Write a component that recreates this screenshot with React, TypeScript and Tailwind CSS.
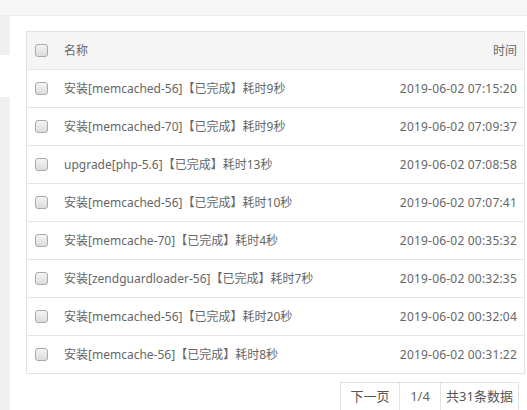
const rows = [
  { name: "安装[memcached-56]【已完成】耗时9秒", time: "2019-06-02 07:15:20" },
  { name: "安装[memcached-70]【已完成】耗时9秒", time: "2019-06-02 07:09:37" },
  { name: "upgrade[php-5.6]【已完成】耗时13秒", time: "2019-06-02 07:08:58" },
  { name: "安装[memcached-56]【已完成】耗时10秒", time: "2019-06-02 07:07:41" },
  { name: "安装[memcache-70]【已完成】耗时4秒", time: "2019-06-02 00:35:32" },
  { name: "安装[zendguardloader-56]【已完成】耗时7秒", time: "2019-06-02 00:32:35" },
  { name: "安装[memcached-56]【已完成】耗时20秒", time: "2019-06-02 00:32:04" },
  { name: "安装[memcache-56]【已完成】耗时8秒", time: "2019-06-02 00:31:22" },
];

function Box() {
  return (
    <span className="block w-[13px] h-[13px] rounded-[3px] border border-[#a9a9a9] bg-gradient-to-b from-[#f4f4f4] to-[#dcdcdc]" />
  );
}

export default function App() {
  return (
    <div
      className="w-[527px] h-[410px] overflow-hidden bg-white text-[12px] text-[#666]"
      style={{ fontFamily: '"Noto Sans", "Noto Sans CJK SC", sans-serif' }}
    >
      {/* top strip */}
      <div className="h-[16px] bg-[#f6f6f6] border-b border-[#ececec]" />

      <div className="flex h-[394px]">
        {/* left edge of side panel */}
        <div className="w-[11px] flex flex-col">
          <div className="h-[39px] w-[10px] bg-[#f0f0f0]" />
          <div className="h-[42px]" />
          <div className="flex-1 w-[10px] bg-[#f0f0f0]" />
        </div>

        <div className="flex-1 pl-[15px] pt-[15px] pr-[2px]">
          <div className="border border-[#e2e2e2]">
            <div className="flex items-center h-[37px] bg-[#f5f5f5]">
              <div className="w-[37px] pl-[8px]">
                <Box />
              </div>
              <div className="flex-1">名称</div>
              <div className="pr-[7px]">时间</div>
            </div>
            {rows.map((r, i) => (
              <div key={i} className="flex items-center h-[38px] border-t border-[#e6e6e6]">
                <div className="w-[37px] pl-[8px]">
                  <Box />
                </div>
                <div className="flex-1 whitespace-nowrap">{r.name}</div>
                <div className="pr-[7px] whitespace-nowrap tracking-[0.2px]">{r.time}</div>
              </div>
            ))}
          </div>

          <div className="flex justify-end mt-[8px] pr-[6px]">
            <div className="flex h-[29px] border border-[#e2e2e2] text-[13px]">
              <span className="flex items-center justify-center w-[58px] text-[#555]">下一页</span>
              <span className="flex items-center justify-center w-[41px] border-l border-[#e2e2e2]">1/4</span>
              <span className="flex items-center justify-center w-[78px] border-l border-[#e2e2e2] text-[#555]">共31条数据</span>
            </div>
          </div>
        </div>
      </div>
    </div>
  );
}
